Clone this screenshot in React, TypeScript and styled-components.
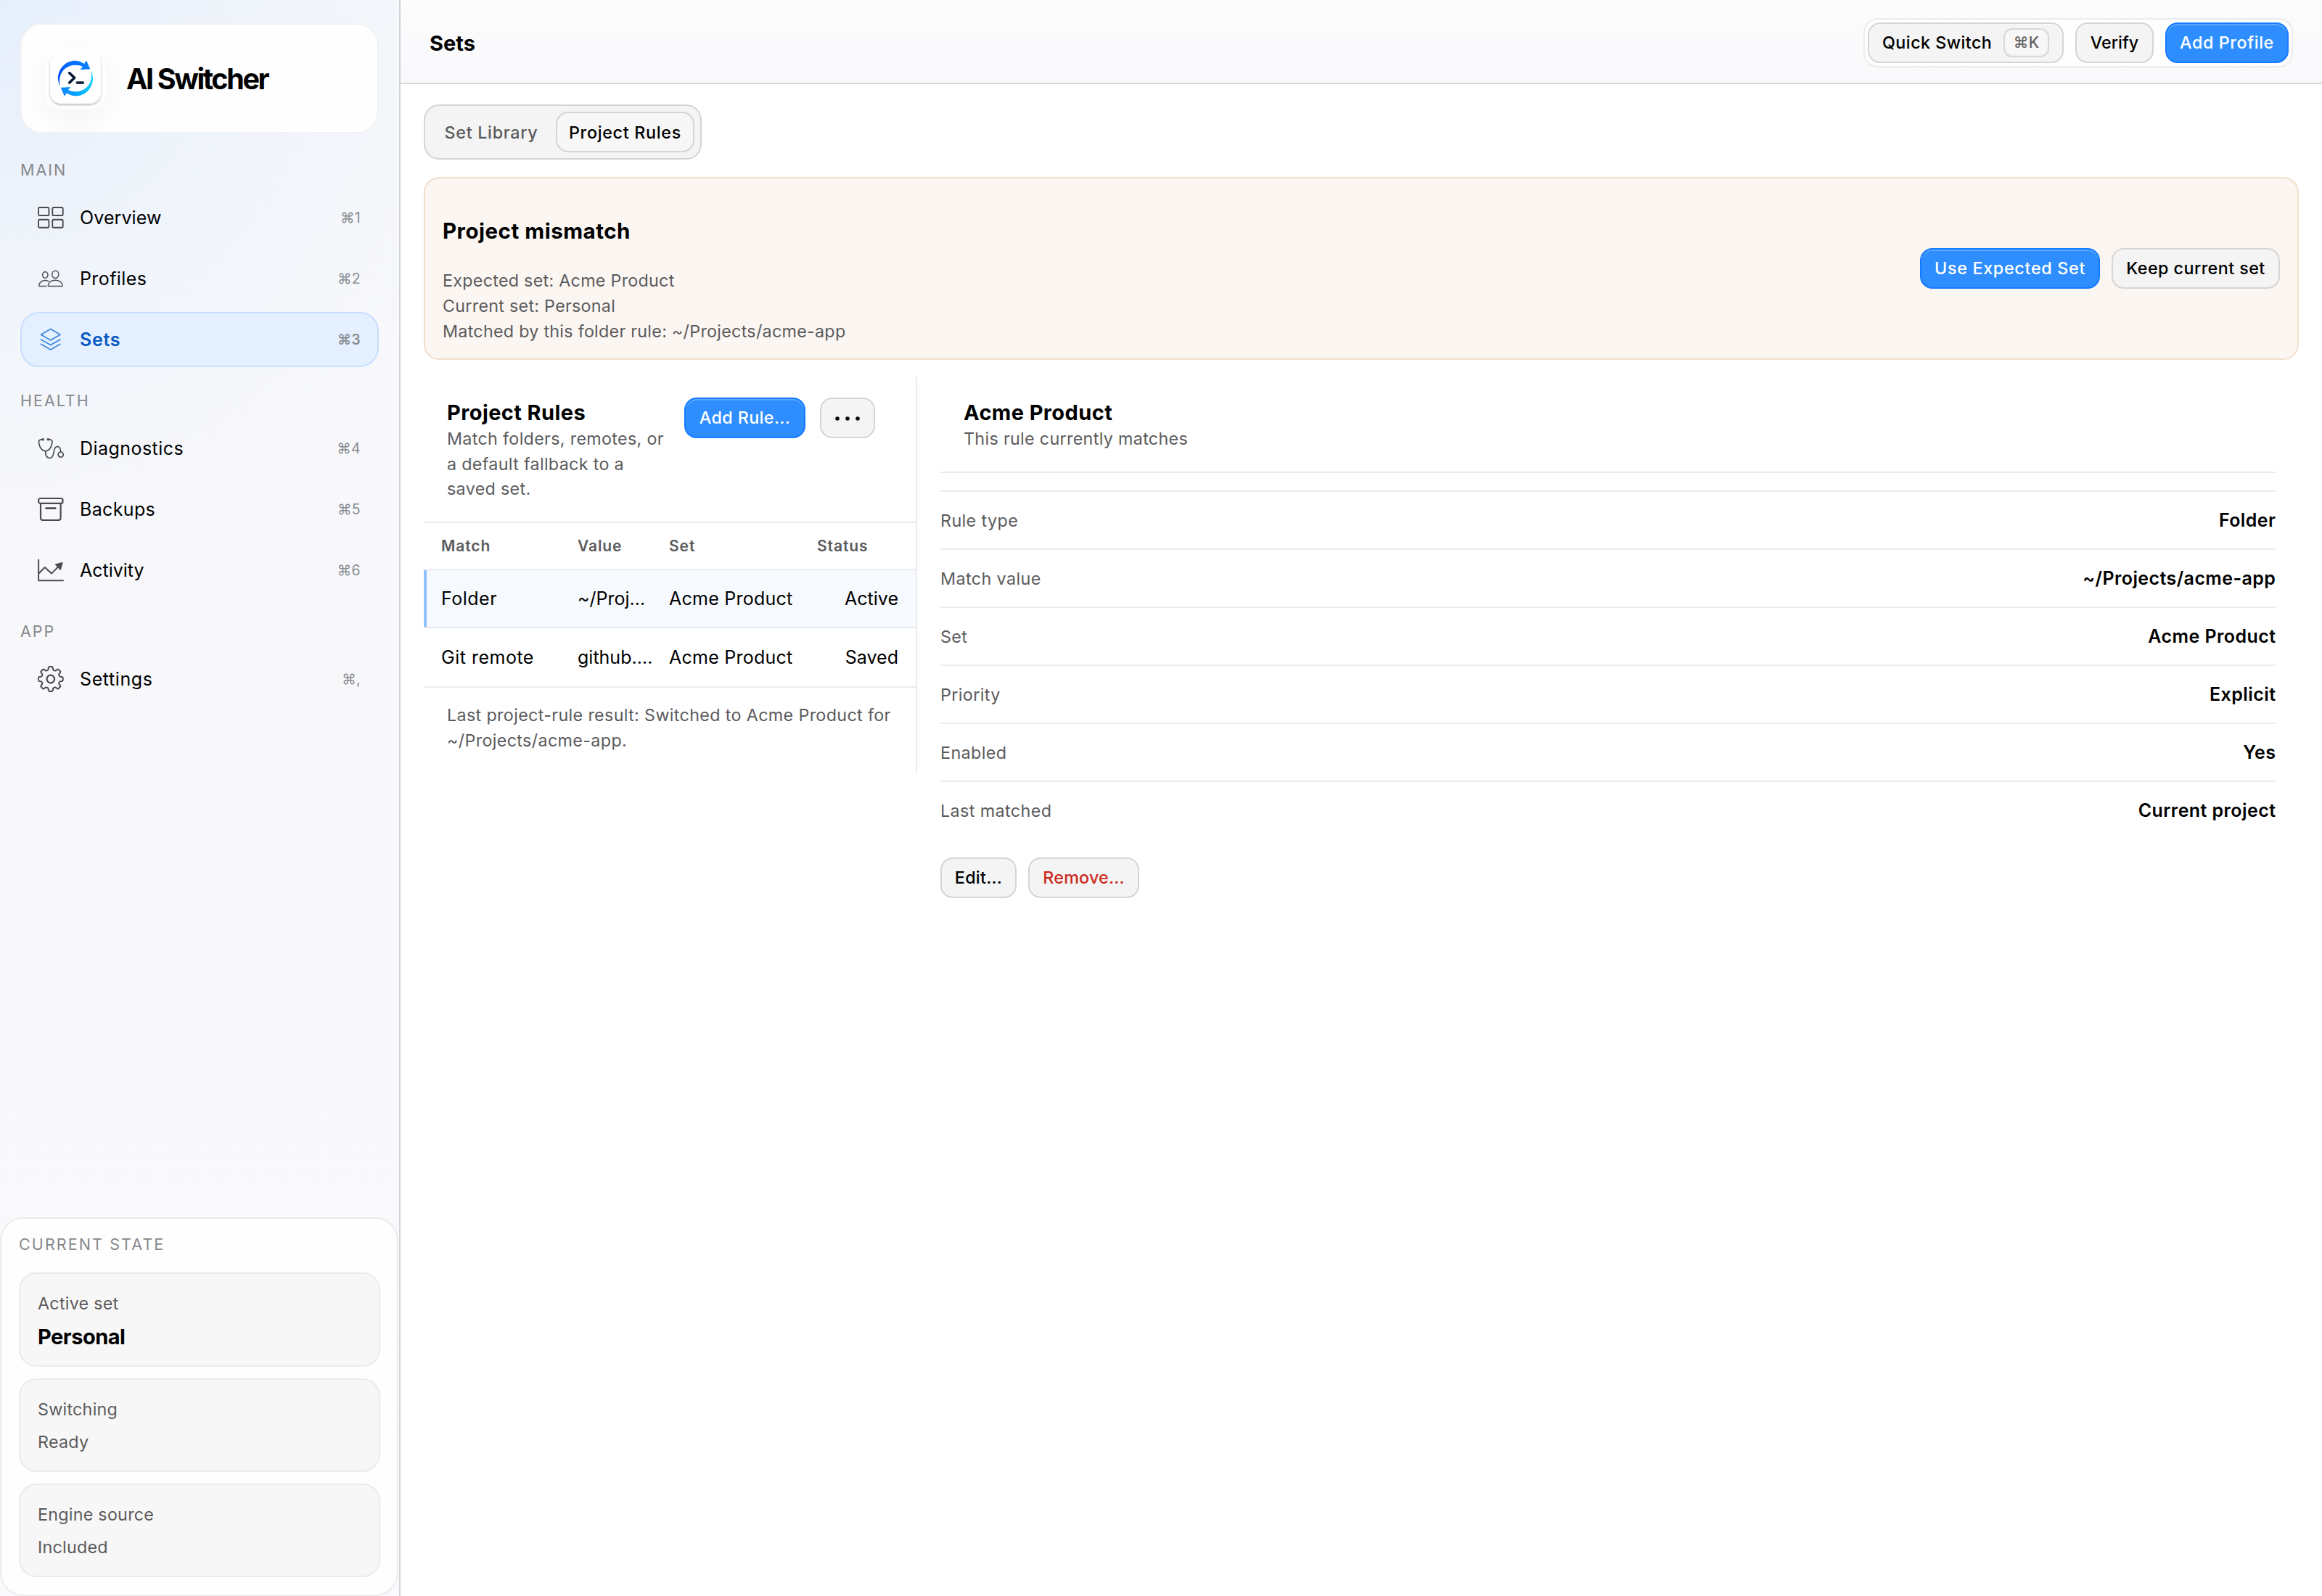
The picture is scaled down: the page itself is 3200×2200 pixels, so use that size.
import React from "react";
import styled, { createGlobalStyle, css } from "styled-components";

const GlobalStyle = createGlobalStyle`
  *, *::before, *::after { box-sizing: border-box; }
  body {
    margin: 0;
    background: #ffffff;
    color: #000000;
    font-family: Inter, "Liberation Sans", sans-serif;
    -webkit-font-smoothing: antialiased;
  }
  h1, h2, h3, p, dl, dt, dd { margin: 0; font-weight: inherit; }
  button { font-family: inherit; color: inherit; }
`;

const line = "#ebebec";
const muted = "#5b5b5d";

/* ---------- shell ---------- */

const Shell = styled.div`
  display: flex;
  width: 3200px;
  height: 2200px;
  overflow: hidden;
`;

const Sidebar = styled.aside`
  display: flex;
  flex-direction: column;
  width: 552px;
  flex: none;
  border-right: 2px solid #d2d4da;
  background:
    radial-gradient(ellipse 700px 760px at 0 0, rgba(208, 228, 253, 0.46), rgba(222, 234, 252, 0.3) 45%, rgba(245, 248, 253, 0) 100%),
    linear-gradient(#f7f8fb, #f8f8fb 50%, #fafafd);
`;

const Main = styled.main`
  display: flex;
  flex-direction: column;
  flex: 1;
  min-width: 0;
`;

/* ---------- sidebar ---------- */

const Brand = styled.div`
  display: flex;
  align-items: center;
  gap: 28px;
  height: 152px;
  margin: 32px 28px 4px;
  padding: 0 32px;
  border: 2px solid #f1f2f3;
  border-radius: 30px;
  background: #fefefe;
  overflow: hidden;
`;

const LogoFrame = styled.div`
  width: 84px;
  height: 84px;
  border-radius: 20px;
  background: #fefefe;
  box-shadow: 0 14px 44px rgba(0, 0, 0, 0.045);
`;

const BrandName = styled.h1`
  padding-top: 2px;
  font-size: 39.5px;
  font-weight: 700;
  letter-spacing: -2.4px;
  line-height: 48px;
  white-space: nowrap;
`;

const Nav = styled.nav`
  display: flex;
  flex-direction: column;
  padding: 0 28px;
`;

const NavSection = styled.section`
  display: flex;
  flex-direction: column;
  gap: 8px;
  padding-top: 31px;
`;

const NavLabel = styled.h2`
  margin-bottom: 5px;
  font-size: 21.5px;
  line-height: 30px;
  letter-spacing: 2px;
  color: #86888c;
`;

const NavItem = styled.a<{ $active?: boolean }>`
  display: flex;
  align-items: center;
  gap: 22px;
  height: 76px;
  padding: 0 23px 0 22px;
  border: 2px solid transparent;
  border-radius: 26px;
  font-size: 25px;
  color: #000000;
  ${(p) =>
    p.$active &&
    css`
      border-color: #c8dffe;
      background: #e4f0ff;
      font-weight: 600;
      color: #0a58c2;
    `}
`;

const NavText = styled.span<{ $track: number }>`
  flex: 1;
  letter-spacing: ${(p) => p.$track}px;
`;

const Shortcut = styled.span`
  font-size: 19.5px;
  letter-spacing: 0.3px;
  color: #8a8c90;
`;

const Icon = styled.svg<{ $active?: boolean }>`
  width: 36px;
  height: 36px;
  flex: none;
  fill: none;
  stroke: ${(p) => (p.$active ? "#3e86da" : "#4b4c4e")};
  stroke-width: 1.7;
  stroke-linecap: round;
  stroke-linejoin: round;
`;

const StatePanel = styled.section`
  display: flex;
  flex-direction: column;
  gap: 16px;
  width: 549px;
  height: 522px;
  margin-top: auto;
  padding: 0 23px 0 24px;
  border: 2px solid #ececee;
  border-radius: 32px;
  background: #fefefe;
`;

const StateHeading = styled.h2`
  margin-top: 20px;
  margin-bottom: 8px;
  font-size: 21.5px;
  line-height: 30px;
  letter-spacing: 2.1px;
  color: #87878a;
`;

const StateCard = styled.div<{ $height: number }>`
  display: flex;
  flex-direction: column;
  gap: 9px;
  flex: none;
  height: ${(p) => p.$height}px;
  padding: 23px 24px 0;
  border: 2px solid #ebebeb;
  border-radius: 24px;
  background: #f7f7f7;
  font-size: 23.3px;
  line-height: 36px;
  letter-spacing: 0.25px;
  color: ${muted};
`;

const StateStrong = styled.strong`
  padding-top: 1px;
  font-size: 29px;
  font-weight: 700;
  letter-spacing: -0.5px;
  color: #000000;
`;

/* ---------- buttons ---------- */

const Button = styled.button<{ $kind?: "primary" | "danger"; $width: number; $track?: number }>`
  display: inline-flex;
  align-items: center;
  justify-content: center;
  flex: none;
  width: ${(p) => p.$width}px;
  height: 56px;
  padding: 0 18px 1px;
  border: 2px solid #d5d5d5;
  border-radius: 17px;
  background: #f4f4f4;
  box-shadow: inset 0 2px 0 rgba(255, 255, 255, 0.3);
  font-size: 23.3px;
  font-weight: 500;
  letter-spacing: ${(p) => p.$track ?? 0.5}px;
  white-space: nowrap;
  ${(p) =>
    p.$kind === "primary" &&
    css`
      border-color: #147aff;
      background: #2f8eff;
      box-shadow: inset 0 2px 0 rgba(255, 255, 255, 0.22);
      color: #ffffff;
    `}
  ${(p) =>
    p.$kind === "danger" &&
    css`
      color: #cb2a1d;
    `}
`;

const QuickSwitch = styled(Button)`
  justify-content: space-between;
`;

const Kbd = styled.kbd`
  display: flex;
  align-items: center;
  justify-content: center;
  width: 63px;
  height: 40px;
  border: 2px solid #d8d8d8;
  border-radius: 12px;
  background: #f7f7f7;
  box-shadow: inset 0 -2px 0 #efefef;
  font-family: inherit;
  font-size: 21px;
  letter-spacing: 0.2px;
  color: #626262;
`;

const Dots = styled.svg`
  width: 36px;
  height: 8px;
  fill: #0a0a0a;
`;

/* ---------- top bar and tabs ---------- */

const TopBar = styled.header`
  display: flex;
  align-items: center;
  justify-content: space-between;
  height: 116px;
  padding: 4px 40px 0;
  border-bottom: 2px solid #d9d9dd;
  background: linear-gradient(#fcfcfd, #f9f9fc);
`;

const PageTitle = styled.h1`
  padding-top: 1px;
  font-size: 29px;
  font-weight: 700;
  letter-spacing: 0;
  line-height: 38px;
`;

const Actions = styled.div`
  display: flex;
  gap: 16px;
  padding: 4px;
  border: 2px solid #ececed;
  border-radius: 20px;
  background: #fefefe;
`;

const Content = styled.div`
  display: flex;
  flex-direction: column;
  align-items: stretch;
  gap: 24px;
  padding: 28px 32px;
`;

const Tabs = styled.div`
  display: flex;
  align-items: center;
  gap: 6px;
  align-self: flex-start;
  height: 76px;
  padding: 0 8px;
  border: 2px solid #d4d4d4;
  border-radius: 21px;
  background: #f4f4f4;
`;

const Tab = styled.button<{ $active?: boolean; $width: number }>`
  width: ${(p) => p.$width}px;
  height: 56px;
  padding: 0;
  border: 2px solid ${(p) => (p.$active ? "#d5d5d5" : "transparent")};
  border-radius: 17px;
  background: ${(p) => (p.$active ? "#f7f7f7" : "transparent")};
  font-size: 23.3px;
  font-weight: 500;
  letter-spacing: 0.7px;
  color: ${(p) => (p.$active ? "#000000" : muted)};
`;

/* ---------- banner ---------- */

const Banner = styled.section`
  display: flex;
  align-items: center;
  justify-content: space-between;
  height: 252px;
  padding: 0 24px;
  border: 2px solid #f1dfca;
  border-radius: 21px;
  background: #fbf6f2;
`;

const BannerTitle = styled.h2`
  margin-top: 34px;
  margin-bottom: 33px;
  font-size: 29.5px;
  font-weight: 700;
  line-height: 36px;
  letter-spacing: 0.5px;
`;

const BannerLine = styled.p`
  font-size: 23.3px;
  line-height: 35px;
  letter-spacing: 0.27px;
  color: ${muted};
`;

const ButtonRow = styled.div<{ $gap?: number }>`
  display: flex;
  gap: ${(p) => p.$gap ?? 16}px;
`;

/* ---------- rules list ---------- */

const Split = styled.div`
  display: flex;
  align-items: flex-start;
`;

const RulesPane = styled.section`
  width: 680px;
  height: 546px;
  flex: none;
  border-right: 2px solid ${line};
`;

const RulesHeader = styled.header`
  display: flex;
  align-items: flex-start;
  justify-content: space-between;
  height: 201px;
  padding: 28px 56px 0 32px;
  border-bottom: 2px solid ${line};
`;

const PaneText = styled.div<{ $width?: number }>`
  width: ${(p) => (p.$width ? `${p.$width}px` : "auto")};
  padding-top: 2px;
`;

const PaneTitle = styled.h2`
  font-size: 29px;
  font-weight: 700;
  line-height: 38px;
  letter-spacing: 0.4px;
`;

const PaneNote = styled.p`
  font-size: 23.3px;
  line-height: 34.5px;
  letter-spacing: 0.32px;
  color: ${muted};
`;

const gridColumns = css`
  display: grid;
  grid-template-columns: 188px 126px 204px 112px;
  align-items: center;
  padding-left: 24px;
  border-bottom: 2px solid ${line};
`;

const TableHead = styled.div`
  ${gridColumns}
  height: 65px;
  font-size: 21px;
  font-weight: 600;
  letter-spacing: 0.9px;
  color: ${muted};
`;

const TableRow = styled.div<{ $selected?: boolean; $height: number }>`
  ${gridColumns}
  height: ${(p) => p.$height}px;
  font-size: 25px;
  letter-spacing: 0.25px;
  ${(p) =>
    p.$selected &&
    css`
      border-bottom-color: #e5e9ef;
      background: linear-gradient(90deg, #8fc1ff 4px, #f6faff 4px);
    `}
`;

const MatchCell = styled.span`
  letter-spacing: 0.5px;
`;

const ValueCell = styled.span`
  letter-spacing: 0;
`;

const StatusCell = styled.span`
  text-align: right;
  letter-spacing: 0;
`;

const ResultNote = styled(PaneNote)`
  padding: 21px 24px 0 32px;
  letter-spacing: 0.35px;
`;

/* ---------- detail pane ---------- */

const DetailPane = styled.section`
  flex: 1;
  padding: 0 32px;
`;

const DetailHeader = styled.header`
  height: 132px;
  padding: 28px 32px 0;
  border-bottom: 2px solid ${line};
`;

const DetailList = styled.dl`
  margin: 24px 0 24px;
  border-top: 2px solid ${line};
`;

const DetailRow = styled.div`
  display: flex;
  align-items: center;
  justify-content: space-between;
  height: 80px;
  border-bottom: 2px solid ${line};
  &:last-child { border-bottom-color: transparent; }
`;

const Term = styled.dt`
  font-size: 23.3px;
  letter-spacing: 0.4px;
  color: ${muted};
`;

const Value = styled.dd`
  font-size: 25px;
  font-weight: 600;
  letter-spacing: 0.42px;
  margin-right: -0.4px;
  color: #000000;
`;

/* ---------- drawings ---------- */

const arc =
  "M127 203C121 190 119 178 120 168C124 128 155 101 190 101C204 101 217 105 228 114L237 100L253 136L212 138L222 126C212 121 200 119 190 119.500C160 120 133 140 127 172C125.500 182 126 192 128 203Z";

const LogoSvg = styled.svg`
  display: block;
  overflow: visible;
`;

const Logo = () => (
  <LogoSvg width="84" height="84" viewBox="66 48 252 252">
    <defs>
      <linearGradient id="upper" gradientUnits="userSpaceOnUse" x1="120" y1="180" x2="250" y2="110">
        <stop offset="0" stopColor="#0048ff" />
        <stop offset="0.5" stopColor="#006bff" />
        <stop offset="1" stopColor="#1183ff" />
      </linearGradient>
      <linearGradient id="lower" gradientUnits="userSpaceOnUse" x1="253" y1="136" x2="120" y2="170">
        <stop offset="0" stopColor="#0a84ff" />
        <stop offset="0.55" stopColor="#06b0ff" />
        <stop offset="1" stopColor="#19d3ff" />
      </linearGradient>
      <filter id="lift" x="-20%" y="-20%" width="140%" height="150%">
        <feDropShadow dx="0" dy="6" stdDeviation="5" floodColor="#000000" floodOpacity="0.26" />
      </filter>
    </defs>
    <rect x="87" y="66" width="210" height="212" rx="46" fill="#fefefe" filter="url(#lift)" />
    <path d={arc} fill="url(#upper)" />
    <path d={arc} fill="url(#lower)" transform="rotate(180 192 174)" />
    <g fill="none" stroke="#081735" strokeWidth="10.500" strokeLinecap="round" strokeLinejoin="round">
      <path d="M167 151.500L188 172L167 192" />
      <path d="M199 192H223" />
    </g>
  </LogoSvg>
);

const gearPath = (() => {
  const at = (deg: number, r: number) => {
    const a = (deg * Math.PI) / 180;
    return `${(17.8 + r * Math.sin(a)).toFixed(2)} ${(18 - r * Math.cos(a)).toFixed(2)}`;
  };
  let d = "";
  for (let k = 0; k < 8; k++) {
    const c = k * 45;
    d += `${k ? "L" : "M"}${at(c - 14, 13.4)}L${at(c - 11, 15.8)}Q${at(c - 9, 17)} ${at(c - 5.5, 17)}`;
    d += `L${at(c + 5.5, 17)}Q${at(c + 9, 17)} ${at(c + 11, 15.8)}L${at(c + 14, 13.4)}Q${at(c + 22.5, 11.9)} ${at(c + 31, 13.4)}`;
  }
  return d + "Z";
})();

const icons: Record<string, React.ReactNode> = {
  overview: (
    <g strokeWidth="1.900">
      <rect x="1" y="4" width="14.400" height="11" rx="1.600" />
      <rect x="20.300" y="4" width="14.400" height="11" rx="1.600" />
      <rect x="1" y="20.700" width="14.400" height="11" rx="1.600" />
      <rect x="20.300" y="20.700" width="14.400" height="11" rx="1.600" />
    </g>
  ),
  profiles: (
    <g strokeWidth="1.500">
      <ellipse cx="10.300" cy="13" rx="3.700" ry="4.200" />
      <ellipse cx="24.300" cy="12.300" rx="4.600" ry="5.100" />
      <path d="M11.800 28.400H2.400Q1.600 28.400 1.700 27.400C2.200 23.300 5.800 20.400 10.200 20.400C12 20.400 13.600 20.900 14.900 21.700" />
      <path d="M15.100 28.400Q14.200 28.400 14.300 27.400C15 23 19 20.200 24.200 20.200S33.400 23 34.100 27.400Q34.200 28.400 33.300 28.400Z" />
    </g>
  ),
  sets: (
    <g>
      <path d="M17.700 3.600L31 11.200L17.700 18.900L4.500 11.200Z" />
      <path d="M4.500 18L17.700 25.600L31 18" />
      <path d="M4.500 24.300L17.700 31.900L31 24.300" />
    </g>
  ),
  diagnostics: (
    <g>
      <path d="M6.800 5.800H4.800C2.300 5.800 1.300 7.500 1.500 10C2 16.500 6 21.800 10.700 21.800S19.400 16.500 19.900 10C20.100 7.500 19.100 5.800 16.600 5.800H14.600" />
      <path d="M10.700 22C10.700 28 12.500 31.500 16.500 31.500C20.500 31.500 21.500 28 22.200 23C22.800 18.500 24.500 15.500 27.300 15.500C30.300 15.500 31.500 19 31.700 22.800" />
      <circle cx="31.700" cy="26.600" r="3.600" />
      <path d="M6.900 5.800H7.100M14.300 5.800H14.500" strokeWidth="3.600" />
    </g>
  ),
  backups: (
    <g strokeWidth="2.200">
      <rect x="1.100" y="3" width="33.400" height="6.800" rx="2.400" />
      <path d="M4 10V29.400Q4 33 7.600 33H28Q31.600 33 31.600 29.400V10" />
      <path d="M11.600 16.700H24.200" strokeWidth="2.700" />
    </g>
  ),
  activity: (
    <g strokeWidth="2">
      <path d="M1.100 3.800V32.300H35" />
      <path d="M1.800 22L9.800 14L19 22.600L29.500 12" />
      <path d="M34 7.600L24.500 10.200L31.300 17.300Z" fill="#4b4c4e" strokeWidth="1.200" />
    </g>
  ),
  settings: (
    <g strokeWidth="2">
      <path d={gearPath} />
      <circle cx="17.800" cy="18" r="5.300" strokeWidth="2.300" />
    </g>
  ),
};

/* ---------- data ---------- */

type NavEntry = { id: string; text: string; keys: string; track: number; active?: boolean };

const navigation: { label: string; items: NavEntry[] }[] = [
  {
    label: "MAIN",
    items: [
      { id: "overview", text: "Overview", keys: "⌘1", track: 0.1 },
      { id: "profiles", text: "Profiles", keys: "⌘2", track: 0.4 },
      { id: "sets", text: "Sets", keys: "⌘3", track: 0.7, active: true },
    ],
  },
  {
    label: "HEALTH",
    items: [
      { id: "diagnostics", text: "Diagnostics", keys: "⌘4", track: 0.45 },
      { id: "backups", text: "Backups", keys: "⌘5", track: 0.35 },
      { id: "activity", text: "Activity", keys: "⌘6", track: 0 },
    ],
  },
  { label: "APP", items: [{ id: "settings", text: "Settings", keys: "⌘,", track: 0.6 }] },
];

const details = [
  ["Rule type", "Folder"],
  ["Match value", "~/Projects/acme-app"],
  ["Set", "Acme Product"],
  ["Priority", "Explicit"],
  ["Enabled", "Yes"],
  ["Last matched", "Current project"],
];

export default function App() {
  return (
    <Shell>
      <GlobalStyle />
      <Sidebar>
        <Brand>
          <LogoFrame>
            <Logo />
          </LogoFrame>
          <BrandName>AI Switcher</BrandName>
        </Brand>
        <Nav>
          {navigation.map((section) => (
            <NavSection key={section.label}>
              <NavLabel>{section.label}</NavLabel>
              {section.items.map((item) => (
                <NavItem key={item.id} $active={item.active}>
                  <Icon viewBox="0 0 36 36" $active={item.active}>
                    {icons[item.id]}
                  </Icon>
                  <NavText $track={item.track}>{item.text}</NavText>
                  <Shortcut>{item.keys}</Shortcut>
                </NavItem>
              ))}
            </NavSection>
          ))}
        </Nav>
        <StatePanel>
          <StateHeading>CURRENT STATE</StateHeading>
          <StateCard $height={130}>
            <span>Active set</span>
            <StateStrong>Personal</StateStrong>
          </StateCard>
          <StateCard $height={129}>
            <span>Switching</span>
            <span>Ready</span>
          </StateCard>
          <StateCard $height={129}>
            <span>Engine source</span>
            <span>Included</span>
          </StateCard>
        </StatePanel>
      </Sidebar>

      <Main>
        <TopBar>
          <PageTitle>Sets</PageTitle>
          <Actions>
            <QuickSwitch $width={270} $track={0.45}>
              Quick Switch<Kbd>⌘K</Kbd>
            </QuickSwitch>
            <Button $width={108} $track={0.05}>Verify</Button>
            <Button $width={170} $kind="primary" $track={0.59}>Add Profile</Button>
          </Actions>
        </TopBar>

        <Content>
          <Tabs>
            <Tab $width={166}>Set Library</Tab>
            <Tab $width={191} $active>Project Rules</Tab>
          </Tabs>

          <Banner>
            <div>
              <BannerTitle>Project mismatch</BannerTitle>
              <BannerLine>Expected set: Acme Product</BannerLine>
              <BannerLine>Current set: Personal</BannerLine>
              <BannerLine>Matched by this folder rule: ~/Projects/acme-app</BannerLine>
            </div>
            <ButtonRow>
              <Button $width={248} $kind="primary" $track={0.7}>Use Expected Set</Button>
              <Button $width={232} $track={0.43}>Keep current set</Button>
            </ButtonRow>
          </Banner>

          <Split>
            <RulesPane>
              <RulesHeader>
                <PaneText $width={306}>
                  <PaneTitle>Project Rules</PaneTitle>
                  <PaneNote>Match folders, remotes, or a default fallback to a saved set.</PaneNote>
                </PaneText>
                <ButtonRow $gap={20}>
                  <Button $width={167} $kind="primary" $track={0.39}>Add Rule...</Button>
                  <Button $width={76} aria-label="More">
                    <Dots viewBox="0 0 36 8">
                      <circle cx="4" cy="5" r="2.800" />
                      <circle cx="18" cy="5" r="2.800" />
                      <circle cx="32" cy="5" r="2.800" />
                    </Dots>
                  </Button>
                </ButtonRow>
              </RulesHeader>
              <TableHead>
                <span>Match</span>
                <span>Value</span>
                <span>Set</span>
                <span>Status</span>
              </TableHead>
              <TableRow $selected $height={80}>
                <MatchCell>Folder</MatchCell>
                <ValueCell>~/Proj…</ValueCell>
                <span>Acme Product</span>
                <StatusCell>Active</StatusCell>
              </TableRow>
              <TableRow $height={82}>
                <MatchCell>Git remote</MatchCell>
                <ValueCell>github.…</ValueCell>
                <span>Acme Product</span>
                <StatusCell>Saved</StatusCell>
              </TableRow>
              <ResultNote>
                Last project-rule result: Switched to Acme Product for ~/Projects/acme-app.
              </ResultNote>
            </RulesPane>

            <DetailPane>
              <DetailHeader>
                <PaneText>
                  <PaneTitle>Acme Product</PaneTitle>
                  <PaneNote>This rule currently matches</PaneNote>
                </PaneText>
              </DetailHeader>
              <DetailList>
                {details.map(([term, value]) => (
                  <DetailRow key={term}>
                    <Term>{term}</Term>
                    <Value>{value}</Value>
                  </DetailRow>
                ))}
              </DetailList>
              <ButtonRow>
                <Button $width={105} $track={0.27}>Edit...</Button>
                <Button $width={153} $kind="danger" $track={0.2}>Remove...</Button>
              </ButtonRow>
            </DetailPane>
          </Split>
        </Content>
      </Main>
    </Shell>
  );
}
